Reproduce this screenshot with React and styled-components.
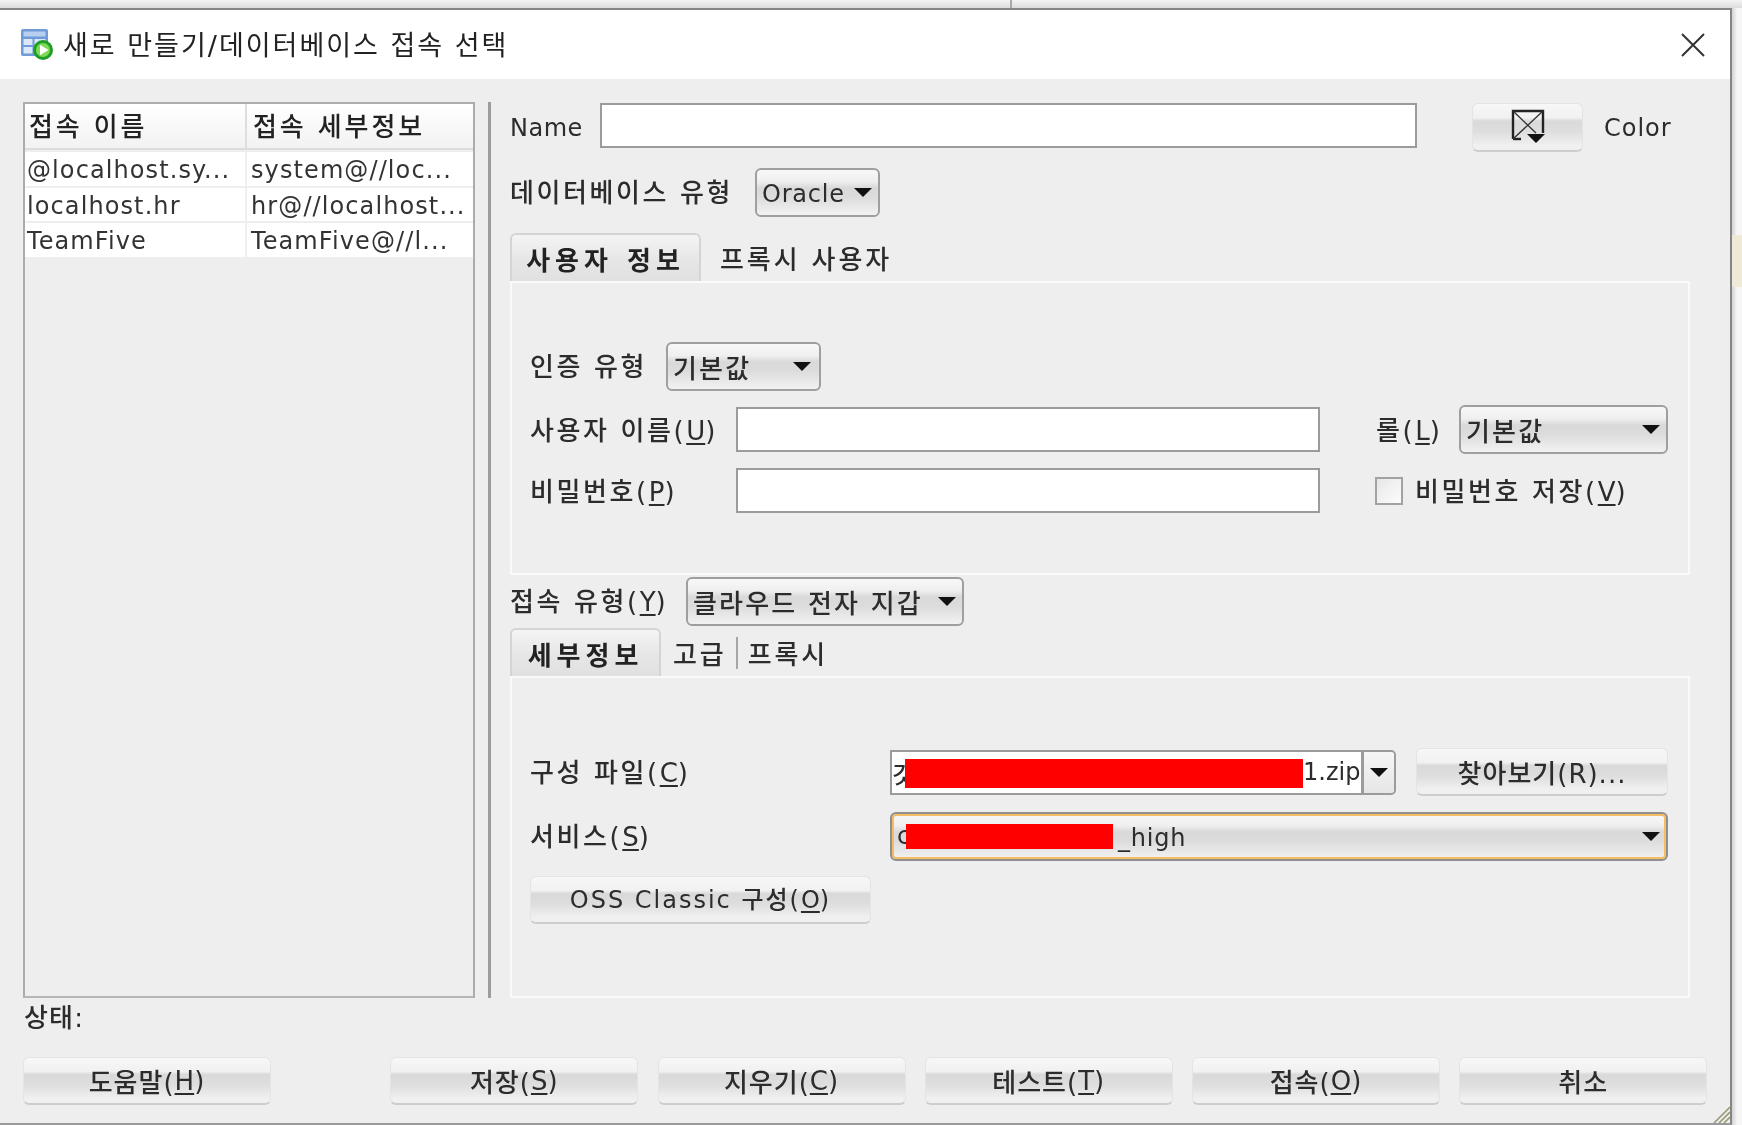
import styled, { createGlobalStyle } from "styled-components";

const Global = createGlobalStyle`
  html, body { margin: 0; padding: 0; background: #f4f4f4; }
  body {
    font-family: "DejaVu Sans", "Noto Sans CJK KR", sans-serif;
    font-weight: 500;
    color: #2c2c2c;
    overflow: hidden;
  }
`;

const Page = styled.div`
  width: 1742px;
  height: 1125px;
  display: flex;
  flex-direction: column;
  overflow: hidden;
  filter: blur(0.55px);
`;
const TopStrip = styled.div`
  height: 8px;
  flex: none;
  padding-left: 1010px;
  background: linear-gradient(#f4f4f4, #dcdcdc);
`;
const TopTick = styled.div`
  width: 2px;
  height: 8px;
  background: #a8a8a8;
`;
const Middle = styled.div`
  display: flex;
  flex: 1;
  min-height: 0;
`;
const Side = styled.div`
  flex: 1;
  padding-top: 227px;
  background: linear-gradient(90deg, #d2d2d2, #f6f6f6 5px);
`;
const SideBand = styled.div`
  height: 52px;
  background: #efe9d8;
`;
const Win = styled.div`
  position: relative;
  width: 1732px;
  height: 1117px;
  flex: none;
  box-sizing: border-box;
  display: flex;
  flex-direction: column;
  background: #eeeeee;
  border-top: 2px solid #858585;
  border-right: 2px solid #858585;
  border-bottom: 2px solid #9a9a9a;
`;
const TitleBar = styled.div`
  height: 69px;
  flex: none;
  background: #fff;
  display: flex;
  align-items: center;
  padding: 0 20px;
`;
const TitleText = styled.div`
  margin-left: 7px;
  padding-top: 2px;
  font-size: 27px;
  font-weight: 400;
  letter-spacing: 2px;
  color: #222;
  line-height: 1;
`;
const CloseBtn = styled.div`
  margin-left: auto;
  margin-right: 4px;
  width: 26px;
  height: 26px;
  display: flex;
`;
const Content = styled.div`
  flex: 1;
  padding: 23px 0 0 23px;
  display: flex;
  flex-direction: column;
`;
const Split = styled.div`
  display: flex;
  height: 896px;
`;
const ListPane = styled.div`
  width: 452px;
  height: 896px;
  box-sizing: border-box;
  border: 2px solid #acacac;
  border-bottom-color: #b6b6b6;
  flex: none;
`;
const ListGrid = styled.div`
  display: grid;
  grid-template-columns: 222px 1fr;
  grid-template-rows: 46px;
  grid-auto-rows: 35.5px;
`;
const HeadCell = styled.div`
  height: 46px;
  box-sizing: border-box;
  background: linear-gradient(#ffffff, #f2f2f2);
  border-bottom: 2px solid #dcdcdc;
  border-right: ${(p) => (p.$last ? "none" : "2px solid #dedede")};
  padding-left: ${(p) => (p.$last ? "6px" : "4px")};
  font-size: 26px;
  letter-spacing: 2.9px;
  line-height: 47px;
  color: #222;
  white-space: pre;
`;
const Cell = styled.div`
  height: 33.5px;
  margin-top: 2px;
  background: #fff;
  border-right: ${(p) => (p.$last ? "none" : "2px solid #f0f0f0")};
  padding-left: ${(p) => (p.$last ? "4px" : "2px")};
  font-size: 24px;
  letter-spacing: 1.1px;
  line-height: 37px;
  color: #333;
  white-space: pre;
  overflow: hidden;
`;
const Splitter = styled.div`
  width: 3px;
  height: 896px;
  margin-left: 13px;
  background: #9c9c9c;
  flex: none;
`;
const RightPane = styled.div`
  margin-left: 19px;
  width: 1180px;
  display: flex;
  flex-direction: column;
`;
const Row = styled.div`
  display: flex;
  align-items: center;
  height: ${(p) => p.$h}px;
  margin-top: ${(p) => p.$top || 0}px;
  flex: none;
`;
const Label = styled.div`
  width: ${(p) => (p.$w ? `${p.$w}px` : "auto")};
  margin-left: ${(p) => p.$left || 0}px;
  padding-top: 2px;
  flex: none;
  font-size: ${(p) => p.$size || 26}px;
  letter-spacing: ${(p) => p.$ls ?? 2.6}px;
  white-space: pre;
  line-height: 1;
  u { text-underline-offset: 3px; letter-spacing: 0; }
`;
const Input = styled.div`
  width: ${(p) => p.$w}px;
  height: 45px;
  margin-bottom: ${(p) => p.$mb || 0}px;
  box-sizing: border-box;
  background: #fff;
  border: 2px solid #9b9b9b;
  flex: none;
`;
const Btn = styled.div`
  width: ${(p) => p.$w}px;
  height: ${(p) => p.$h || 48}px;
  margin-left: ${(p) => p.$left || 0}px;
  box-sizing: border-box;
  flex: none;
  display: flex;
  align-items: center;
  justify-content: center;
  border: 1px solid #e4e4e4;
  border-bottom: 2px solid #cdcdcd;
  border-radius: 6px;
  background: linear-gradient(#f7f7f7 0%, #f1f1f1 30%, #d9d9d9 37%, #dedede 60%, #f0f0f0 90%);
  font-size: ${(p) => p.$size || 26}px;
  letter-spacing: ${(p) => p.$ls ?? 1}px;
  white-space: pre;
  u { text-underline-offset: 3px; letter-spacing: 0; }
`;
const Select = styled.div`
  width: ${(p) => p.$w}px;
  height: ${(p) => p.$h || 49}px;
  box-sizing: border-box;
  flex: none;
  display: flex;
  align-items: center;
  padding: 0 6px 0 5px;
  border: 2px solid ${(p) => (p.$focus ? "#8f8f8f" : "#9f9f9f")};
  border-radius: 6px;
  background: linear-gradient(#f8f8f8 0%, #efefef 26%, #d9d9d9 40%, #dcdcdc 60%, #f2f2f2 100%);
  box-shadow: ${(p) => (p.$focus ? "inset 0 0 0 2px #f4bd63" : "none")};
  font-size: ${(p) => p.$size || 26}px;
  letter-spacing: ${(p) => p.$ls ?? 2.2}px;
  white-space: pre;
`;
const SelectText = styled.span`
  padding-top: ${(p) => p.$pt || 0}px;
  padding-bottom: ${(p) => p.$pb || 0}px;
  margin-left: ${(p) => p.$left || 0}px;
`;
const Caret = styled.div`
  margin-left: auto;
  margin-right: ${(p) => p.$right ?? 0}px;
  width: 0;
  height: 0;
  border-left: 9px solid transparent;
  border-right: 9px solid transparent;
  border-top: 9px solid #111;
  flex: none;
`;
const TabStrip = styled.div`
  display: flex;
  align-items: center;
  height: 49px;
  margin-top: ${(p) => p.$top}px;
  flex: none;
`;
const ActiveTab = styled.div`
  width: ${(p) => p.$w}px;
  height: 49px;
  box-sizing: border-box;
  border: 2px solid #d4d4d4;
  border-bottom: none;
  border-radius: 6px 6px 0 0;
  background: linear-gradient(#f4f4f4, #e6e6e6 55%, #e0e0e0);
  display: flex;
  align-items: center;
  justify-content: center;
  font-size: 26px;
  font-weight: 700;
  letter-spacing: 5px;
  color: #222;
  white-space: pre;
  flex: none;
`;
const Tab = styled.div`
  margin-left: ${(p) => p.$left}px;
  font-size: 26px;
  letter-spacing: 2.9px;
  white-space: pre;
`;
const TabDivider = styled.div`
  width: 2px;
  height: 32px;
  margin-left: 9px;
  background: #a6a6a6;
  flex: none;
`;
const Panel = styled.div`
  height: ${(p) => p.$h}px;
  box-sizing: border-box;
  margin-top: -1px;
  border: 2px solid #fafafa;
  padding: ${(p) => p.$pad}px 0 0 18px;
  flex: none;
`;
const Check = styled.div`
  width: 28px;
  height: 28px;
  margin-left: 55px;
  box-sizing: border-box;
  border: 2px solid #a2a2a2;
  background: linear-gradient(135deg, #e6e6e6, #fdfdfd);
  flex: none;
`;
const Combo = styled.div`
  width: 506px;
  height: 45px;
  box-sizing: border-box;
  display: flex;
  flex: none;
  border: 2px solid #9b9b9b;
  border-radius: 0 5px 5px 0;
  background: #fff;
`;
const ComboText = styled.div`
  flex: 1;
  display: flex;
  align-items: center;
  font-size: 24px;
  overflow: hidden;
  white-space: pre;
`;
const ClippedChar = styled.span`
  width: ${(p) => p.$w}px;
  overflow: hidden;
  flex: none;
`;
const Redact = styled.div`
  width: ${(p) => p.$w}px;
  height: ${(p) => p.$h}px;
  margin-top: ${(p) => p.$top || 0}px;
  background: #ff0000;
  flex: none;
`;
const ComboArrow = styled.div`
  width: 30px;
  flex: none;
  display: flex;
  align-items: center;
  justify-content: center;
  border-left: 3px solid #9b9b9b;
  background: linear-gradient(#f6f6f6, #e6e6e6);
  border-radius: 0 4px 4px 0;
`;
const Status = styled.div`
  height: 28px;
  margin-top: 6px;
  padding-left: 1px;
  font-size: 26px;
  letter-spacing: 1.2px;
  line-height: 28px;
`;
const Footer = styled.div`
  display: flex;
  gap: 19.25px;
  margin-top: 25px;
`;
const Grip = styled.div`
  position: absolute;
  right: 0;
  bottom: 0;
  width: 18px;
  height: 18px;
  display: flex;
`;

const TitleIcon = () => (
  <svg width="36" height="36" viewBox="0 0 36 36" style={{ flex: "none" }}>
    <rect x="1" y="2" width="27" height="27" rx="2" fill="#6f9bd8" />
    <rect x="3.5" y="4.5" width="22" height="5" fill="#b9cff0" />
    <rect x="3.5" y="12" width="9" height="6" fill="#dce8f8" />
    <rect x="14.5" y="12" width="11" height="6" fill="#dce8f8" />
    <rect x="3.5" y="20" width="9" height="6.5" fill="#dce8f8" />
    <circle cx="23" cy="23" r="10" fill="#1f9d24" />
    <circle cx="23" cy="23" r="7" fill="#7ed957" />
    <path d="M20 17.8 L28.5 23 L20 28.2 Z" fill="#fff" />
  </svg>
);

const ColorIcon = () => (
  <svg width="36" height="36" viewBox="0 0 36 36">
    <path d="M3 30 V2 H33 V24" fill="none" stroke="#222" strokeWidth="2.4" />
    <path d="M3 30 H11" fill="none" stroke="#222" strokeWidth="2.4" />
    <path d="M3 2 L26 24 M33 2 L3 30" fill="none" stroke="#333" strokeWidth="1.4" />
    <path d="M17 25 H35 L26 34 Z" fill="#111" />
  </svg>
);

function App() {
  return (
    <>
      <Global />
      <Page>
        <TopStrip>
          <TopTick />
        </TopStrip>
        <Middle>
          <Win>
            <TitleBar>
              <TitleIcon />
              <TitleText>새로 만들기/데이터베이스 접속 선택</TitleText>
              <CloseBtn>
                <svg width="26" height="26" viewBox="0 0 26 26">
                  <path d="M2 2 L24 24 M24 2 L2 24" stroke="#333" strokeWidth="2" />
                </svg>
              </CloseBtn>
            </TitleBar>
            <Content>
              <Split>
                <ListPane>
                  <ListGrid>
                    <HeadCell>접속 이름</HeadCell>
                    <HeadCell $last>접속 세부정보</HeadCell>
                    <Cell>@localhost.sy...</Cell>
                    <Cell $last>system@//loc...</Cell>
                    <Cell>localhost.hr</Cell>
                    <Cell $last>hr@//localhost...</Cell>
                    <Cell>TeamFive</Cell>
                    <Cell $last>TeamFive@//l...</Cell>
                  </ListGrid>
                </ListPane>
                <Splitter />
                <RightPane>
                  <Row $h={50}>
                    <Label $w={90} $size={24} $ls={0.5}>Name</Label>
                    <Input $w={817} $mb={3} />
                    <Btn $w={111} $h={49} $left={55}>
                      <ColorIcon />
                    </Btn>
                    <Label $left={21} $size={24} $ls={1}>Color</Label>
                  </Row>
                  <Row $h={48} $top={16}>
                    <Label $w={245}>데이터베이스 유형</Label>
                    <Select $w={125} $size={24} $ls={0.8}>
                      <SelectText $pt={3}>Oracle</SelectText>
                      <Caret />
                    </Select>
                  </Row>
                  <TabStrip $top={17}>
                    <ActiveTab $w={191}>사용자 정보</ActiveTab>
                    <Tab $left={19}>프록시 사용자</Tab>
                  </TabStrip>
                  <Panel $h={294} $pad={59}>
                    <Row $h={48}>
                      <Label $w={136}>인증 유형</Label>
                      <Select $w={155}>
                        기본값
                        <Caret $right={2} />
                      </Select>
                    </Row>
                    <Row $h={49} $top={15}>
                      <Label $w={206}>
                        사용자 이름(<u>U</u>)
                      </Label>
                      <Input $w={584} />
                      <Label $w={83} $left={56}>
                        롤(<u>L</u>)
                      </Label>
                      <Select $w={209}>
                        기본값
                        <Caret />
                      </Select>
                    </Row>
                    <Row $h={45} $top={14}>
                      <Label $w={206}>
                        비밀번호(<u>P</u>)
                      </Label>
                      <Input $w={584} />
                      <Check />
                      <Label $left={12}>
                        비밀번호 저장(<u>V</u>)
                      </Label>
                    </Row>
                  </Panel>
                  <Row $h={48} $top={2}>
                    <Label $w={176}>
                      접속 유형(<u>Y</u>)
                    </Label>
                    <Select $w={278}>
                      클라우드 전자 지갑
                      <Caret />
                    </Select>
                  </Row>
                  <TabStrip $top={3}>
                    <ActiveTab $w={151}>세부정보</ActiveTab>
                    <Tab $left={12}>고급</Tab>
                    <TabDivider />
                    <Tab $left={10}>프록시</Tab>
                  </TabStrip>
                  <Panel $h={322} $pad={70}>
                    <Row $h={48}>
                      <Label $w={360}>
                        구성 파일(<u>C</u>)
                      </Label>
                      <Combo>
                        <ComboText>
                          <ClippedChar $w={13}>깃</ClippedChar>
                          <Redact $w={398} $h={29} $top={3} />
                          1.zip
                        </ComboText>
                        <ComboArrow>
                          <Caret $right={6} />
                        </ComboArrow>
                      </Combo>
                      <Btn $w={252} $left={20}>찾아보기(R)...</Btn>
                    </Row>
                    <Row $h={48} $top={16}>
                      <Label $w={360}>
                        서비스(<u>S</u>)
                      </Label>
                      <Select $w={778} $focus $size={24} $ls={0.8}>
                        <ClippedChar $w={9}>c</ClippedChar>
                        <Redact $w={207} $h={25} />
                        <SelectText $pt={3} $left={5}>_high</SelectText>
                        <Caret />
                      </Select>
                    </Row>
                    <Row $h={47} $top={16}>
                      <Btn $w={341} $size={24} $ls={2}>
                        <SelectText $pb={3}>OSS Classic 구성(<u>O</u>)</SelectText>
                      </Btn>
                    </Row>
                  </Panel>
                </RightPane>
              </Split>
              <Status>상태:</Status>
              <Footer>
                <Btn $w={248}>
                  도움말(<u>H</u>)
                </Btn>
                <Btn $w={248} $left={100}>
                  저장(<u>S</u>)
                </Btn>
                <Btn $w={248}>
                  지우기(<u>C</u>)
                </Btn>
                <Btn $w={248}>
                  테스트(<u>T</u>)
                </Btn>
                <Btn $w={248}>
                  접속(<u>O</u>)
                </Btn>
                <Btn $w={248}>취소</Btn>
              </Footer>
            </Content>
            <Grip>
              <svg width="18" height="18" viewBox="0 0 18 18">
                <path d="M2 18 L18 2 M7 18 L18 7 M12 18 L18 12" stroke="#9a9a78" strokeWidth="1.6" />
              </svg>
            </Grip>
          </Win>
          <Side>
            <SideBand />
          </Side>
        </Middle>
      </Page>
    </>
  );
}

export default App;
